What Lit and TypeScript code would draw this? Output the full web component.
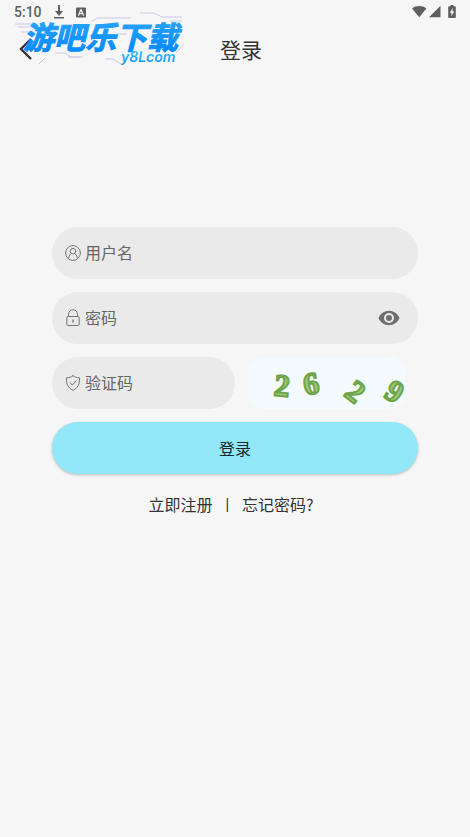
import { LitElement, html, css, svg } from "lit";
import { customElement, state } from "lit/decorators.js";

const captcha = [
  { digit: "2", x: 34, y: 28, turn: 6 },
  { digit: "6", x: 63, y: 26, turn: -10 },
  { digit: "2", x: 108, y: 34, turn: 38 },
  { digit: "9", x: 147, y: 34, turn: 32 },
];

@customElement("status-bar")
class StatusBar extends LitElement {
  static styles = css`
    :host {
      display: flex;
      justify-content: space-between;
      align-items: center;
      height: 24px;
      padding: 0 13px 0 14px;
      color: #5f5f5f;
      font: 500 14px/16px Roboto, sans-serif;
    }
    .group {
      display: flex;
      align-items: center;
    }
    .left {
      gap: 11px;
    }
    svg {
      display: block;
      fill: currentColor;
    }
  `;
  render() {
    return html`
      <div class="group left">
        <time>5:10</time>
        <svg width="12" height="14" viewBox="0 0 12 14">
          <path d="M5 0h2v6h3l-4 5-4-5h3zM1 12h10v1.5H1z" />
        </svg>
        <svg width="10" height="11" viewBox="0 0 10 11">
          <path fill-rule="evenodd" d="M1 0.5h8a1 1 0 0 1 1 1v8a1 1 0 0 1-1 1H1a1 1 0 0 1-1-1v-8a1 1 0 0 1 1-1zM4.3 2.2L1.8 8.7h1.3l.5-1.4h2.8l.5 1.4h1.3L5.7 2.2zM5 3.7l.9 2.5H4.1z" />
        </svg>
      </div>
      <div class="group">
        <svg width="45" height="14" viewBox="0 0 45 14">
          <path d="M0 3.4C4.3 .3 10 .3 14.4 3.4L7.2 12.3z" />
          <path d="M28.5 .8v11.5H17z" />
          <path fill-rule="evenodd" d="M38.5 0h3v1.2h1.6c.4 0 .7.3.7.7v10.3c0 .5-.3.8-.7.8h-6.2c-.4 0-.7-.3-.7-.8V1.9c0-.4.3-.7.7-.7h1.6zM40.6 3l-2.7 4.8h1.6v3.4l2.7-4.8h-1.6z" />
        </svg>
      </div>
    `;
  }
}

@customElement("site-mark")
class SiteMark extends LitElement {
  static styles = css`
    :host {
      display: block;
    }
    svg {
      display: block;
      overflow: visible;
    }
    .name {
      font: italic 700 31px "Noto Sans CJK SC", sans-serif;
      fill: url(#blue);
      stroke: url(#blue);
      stroke-width: 1px;
    }
    .domain {
      font: italic 600 14px Inter, sans-serif;
      fill: url(#sky);
    }
    .trace {
      fill: none;
      stroke: #cbc9ea;
      stroke-width: 1;
    }
  `;
  render() {
    return html`
      <svg width="176" height="56" viewBox="0 0 176 56" role="img" aria-label="游吧乐下载 y8Lcom">
        <defs>
          <linearGradient id="blue" x1="0" y1="0" x2="0" y2="1">
            <stop offset="0.25" stop-color="#22a0fa" />
            <stop offset="0.8" stop-color="#078cff" />
          </linearGradient>
          <linearGradient id="sky" x1="0" y1="0" x2="0" y2="1">
            <stop offset="0.2" stop-color="#35c4f4" />
            <stop offset="0.8" stop-color="#189cf8" />
          </linearGradient>
        </defs>
        <path class="trace" d="M0 12h20M3 15h20M6 20h12M76 10l6-4h34M125 1h14l8 4h20M40 41h10l6 4h10M53 45h15M90 47h8l8 5M24 52l6-6M169 32l-8 9M102 22h10M155 9h12M118 22h6" />
        <text class="name" x="8" y="37">游吧乐下载</text>
        <text class="domain" x="106" y="50">y8Lcom</text>
      </svg>
    `;
  }
}

@customElement("app-root")
class AppRoot extends LitElement {
  @state() private revealed = false;

  static styles = css`
    :host {
      display: block;
      min-height: 100vh;
      background: #f6f6f6;
      color: #333333;
      font: 16px/24px "Noto Sans CJK SC", sans-serif;
    }
    * {
      box-sizing: border-box;
    }
    header {
      position: relative;
    }
    .bar {
      display: grid;
      grid-template-columns: 52px 1fr 52px;
      align-items: center;
      height: 50px;
    }
    h1 {
      margin: 0;
      padding-left: 12px;
      text-align: center;
      font-size: 21px;
      font-weight: 400;
      line-height: 32px;
    }
    button {
      border: 0;
      padding: 0;
      background: none;
      color: inherit;
      font: inherit;
      cursor: pointer;
    }
    .back {
      display: flex;
      justify-content: center;
    }
    .mark {
      position: absolute;
      left: 15px;
      top: 12px;
      pointer-events: none;
    }
    svg {
      display: block;
      flex: none;
    }
    form {
      display: flex;
      flex-direction: column;
      gap: 13px;
      padding: 153px 52px 0;
    }
    .field {
      display: flex;
      align-items: center;
      gap: 4px;
      height: 52px;
      padding: 0 18px 0 13px;
      border-radius: 26px;
      background: #eaeaea;
      color: #777777;
    }
    .line {
      fill: none;
      stroke: currentColor;
      stroke-width: 1;
      stroke-linecap: round;
      stroke-linejoin: round;
    }
    input {
      flex: 1;
      min-width: 0;
      height: 30px;
      padding: 0 0 2px;
      border: 0;
      outline: 0;
      background: none;
      color: #333333;
      font: inherit;
    }
    input::placeholder {
      color: #666666;
      opacity: 1;
    }
    .row {
      display: grid;
      grid-template-columns: minmax(0, 1fr) minmax(0, 1fr);
    }
    .code {
      height: 52px;
      margin: 0 13px;
      border-radius: 16px;
      background: #f3fbff;
    }
    .code svg {
      overflow: visible;
    }
    .digit {
      font: 700 31px "Liberation Serif", serif;
      text-anchor: middle;
      fill: #9cc57e;
      stroke: #6fa548;
      stroke-width: 2px;
    }
    .submit {
      height: 52px;
      border-radius: 26px;
      background: #92e8f9;
      color: #15282c;
      box-shadow: 0 1px 3px rgba(0, 0, 0, 0.25);
    }
    nav {
      display: flex;
      justify-content: center;
      gap: 13px;
      padding: 18px 8px 0 0;
    }
    .divider {
      font: 14px/24px "Liberation Sans", sans-serif;
    }
    a {
      color: inherit;
      text-decoration: none;
    }
  `;

  render() {
    return html`
      <header>
        <status-bar></status-bar>
        <div class="bar">
          <button class="back" aria-label="返回">
            <svg width="14" height="22" viewBox="0 0 14 22">
              <path d="M12 1L2 11l10 10" fill="none" stroke="#333333" stroke-width="2.4" />
            </svg>
          </button>
          <h1>登录</h1>
        </div>
        <site-mark class="mark"></site-mark>
      </header>
      <main>
        <form @submit=${(e: Event) => e.preventDefault()}>
          <label class="field">
            <svg class="line" width="16" height="16" viewBox="0 0 16 16">
              <circle cx="8" cy="8" r="7.4" />
              <circle cx="8" cy="6.2" r="2.8" />
              <path d="M3.8 12.8c.2-2.4 1.2-3.7 2.7-4.3M12.2 12.8c-.2-2.4-1.2-3.7-2.7-4.3" />
            </svg>
            <input type="text" placeholder="用户名" aria-label="用户名" />
          </label>
          <div class="field">
            <svg class="line" width="16" height="18" viewBox="0 0 16 18">
              <rect x="1.8" y="7.5" width="12.4" height="9" rx="1.2" />
              <path d="M3.5 7.5V5.2a4.5 4.500 0 0 1 9 0v2.3" />
              <path d="M8 11v2" stroke-width="1.4" />
            </svg>
            <input type=${this.revealed ? "text" : "password"} placeholder="密码" aria-label="密码" />
            <button type="button" aria-label="显示密码" @click=${() => (this.revealed = !this.revealed)}>
              <svg width="22" height="16" viewBox="0 0 22 16">
                <path fill="#6f6f6f" fill-rule="evenodd" d="M11 .8C6.2 .8 2.2 3.8 .5 8c1.7 4.2 5.7 7.2 10.5 7.2S19.8 12.2 21.5 8C19.8 3.8 15.8 .8 11 .8zM11 3a5 5 0 1 1 0 10a5 5 0 0 1 0-10zM11 5a3 3 0 1 0 0 6a3 3 0 0 0 0-6z" />
              </svg>
            </button>
          </div>
          <div class="row">
            <label class="field">
              <svg class="line" width="16" height="16" viewBox="0 0 16 16">
                <path d="M8 .8c2 1.4 4.2 2 6.6 2C14.8 9 13 13 8 15.3C3 13 1.2 9 1.4 2.8C3.8 2.8 6 2.2 8 .8z" />
                <path d="M5 7.8l2.3 2.2L11.2 5.8" />
              </svg>
              <input type="text" placeholder="验证码" aria-label="验证码" />
            </label>
            <div class="code">
              <svg width="157" height="52" viewBox="0 0 157 52" role="img" aria-label="2629">
                ${captcha.map(
                  (c) => svg`<text class="digit" y="11" transform=${`translate(${c.x} ${c.y}) rotate(${c.turn})`}>${c.digit}</text>`
                )}
              </svg>
            </div>
          </div>
          <button class="submit">登录</button>
        </form>
        <nav>
          <a href="#register">立即注册</a>
          <span class="divider">|</span>
          <a href="#forgot">忘记密码?</a>
        </nav>
      </main>
    `;
  }
}
